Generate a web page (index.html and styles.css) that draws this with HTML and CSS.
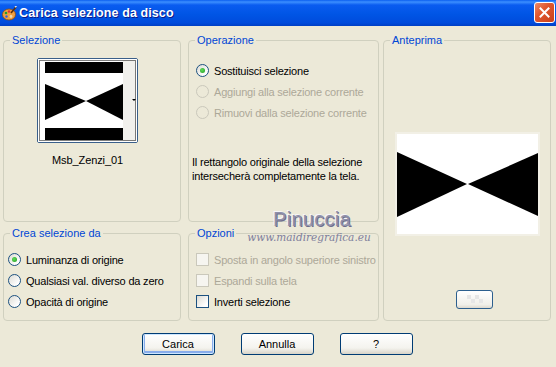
FILE: index.html
```html
<!DOCTYPE html>
<html lang="it">
  <head>
    <meta charset="UTF-8" />
    <meta name="viewport" content="width=device-width, initial-scale=1.0" />
    <title>Carica selezione da disco</title>
    <link rel="stylesheet" href="styles.css">
  </head>
  <body>
    <div class="window">
      <div class="titlebar">
        <svg class="app-icon" width="15" height="15" viewBox="0 0 15 15">
          <ellipse cx="7" cy="8.5" rx="6.5" ry="5.5" fill="#f0a040" stroke="#8a4a10" stroke-width="0.8" />
          <circle cx="4" cy="7" r="1.3" fill="#2a9a2a" />
          <circle cx="7" cy="5.5" r="1.2" fill="#e03030" />
          <circle cx="4.5" cy="10.5" r="1.2" fill="#3060e0" />
          <circle cx="9" cy="10.5" r="1.4" fill="#ecd9b0" />
          <path d="M9 7 L14 1" stroke="#5a3010" stroke-width="1.6" />
          <path d="M13 1 L14.5 0" stroke="#e0e0e0" stroke-width="1.6" />
        </svg>
        <span class="title">Carica selezione da disco</span>
        <button class="close-btn" aria-label="Chiudi">
          <svg width="11" height="11" viewBox="0 0 11 11">
            <path d="M1.5 1.5 L9.5 9.5 M9.5 1.5 L1.5 9.5" stroke="#ffffff" stroke-width="2" stroke-linecap="square" />
          </svg>
        </button>
      </div>

      <div class="dialog">
        <div class="groups">
          <fieldset class="group group-sel">
            <legend>Selezione</legend>
            <div class="thumb-col">
              <div class="thumb">
                <svg width="99" height="83" viewBox="0 0 99 83">
                  <rect width="99" height="83" fill="#ffffff" />
                  <rect x="85" y="1" width="13" height="81" fill="#f1f0ec" />
                  <rect x="7" y="3" width="78" height="11" fill="#000000" />
                  <rect x="7" y="69" width="78" height="12" fill="#000000" />
                  <polygon points="7,25 7,61 48,42" fill="#000000" />
                  <polygon points="85,25 85,61 48,42" fill="#000000" />
                  <polygon points="94,40 98,40 96,42" fill="#000000" />
                  <rect x="1.5" y="1.5" width="96" height="80" fill="none" stroke="#000000" stroke-width="1" stroke-dasharray="1 1" />
                </svg>
              </div>
              <div class="thumb-name">Msb_Zenzi_01</div>
            </div>
          </fieldset>

          <fieldset class="group group-op">
            <legend>Operazione</legend>
            <div class="options options-op">
              <label class="option"><span class="radio checked"></span>Sostituisci selezione</label>
              <label class="option disabled"><span class="radio"></span>Aggiungi alla selezione corrente</label>
              <label class="option disabled"><span class="radio"></span>Rimuovi dalla selezione corrente</label>
            </div>
            <p class="note">Il rettangolo originale della selezione intersecherà completamente la tela.</p>
          </fieldset>

          <fieldset class="group group-preview">
            <legend>Anteprima</legend>
            <div class="preview">
              <svg width="141" height="100" viewBox="0 0 141 100">
                <rect width="141" height="100" fill="#ffffff" />
                <polygon points="0,18 0,83 70,50" fill="#000000" />
                <polygon points="141,19 141,82 71,50" fill="#000000" />
              </svg>
            </div>
            <button class="bg-btn" aria-label="Sfondo">
              <svg width="16" height="10" viewBox="0 0 16 10">
                <rect x="0" y="0" width="4" height="4" fill="#e6e6e6" />
                <rect x="8" y="0" width="4" height="4" fill="#e6e6e6" />
                <rect x="4" y="4" width="4" height="4" fill="#e6e6e6" />
                <rect x="12" y="4" width="4" height="4" fill="#e6e6e6" />
              </svg>
            </button>
          </fieldset>

          <fieldset class="group group-crea">
            <legend>Crea selezione da</legend>
            <div class="options options-crea">
              <label class="option"><span class="radio checked"></span>Luminanza di origine</label>
              <label class="option"><span class="radio"></span>Qualsiasi val. diverso da zero</label>
              <label class="option"><span class="radio"></span>Opacità di origine</label>
            </div>
          </fieldset>

          <fieldset class="group group-opz">
            <legend>Opzioni</legend>
            <div class="options options-opz">
              <label class="option disabled"><span class="check"></span>Sposta in angolo superiore sinistro</label>
              <label class="option disabled"><span class="check"></span>Espandi sulla tela</label>
              <label class="option"><span class="check"></span>Inverti selezione</label>
            </div>
          </fieldset>
        </div>

        <div class="buttons">
          <button class="btn btn-default">Carica</button>
          <button class="btn">Annulla</button>
          <button class="btn">?</button>
        </div>
      </div>

      <div class="watermark">
        <span class="wm-name">Pinuccia</span>
        <span class="wm-site">www.maidiregrafica.eu</span>
      </div>
    </div>
  </body>
</html>
```

FILE: styles.css
```css
body {
  margin: 0;
  padding: 0;
  background-color: #ece9d8;
  font-family: "Liberation Sans", Arial, sans-serif;
  font-size: 11px;
  color: #000000;
}

.window {
  position: relative;
  width: 556px;
  height: 367px;
  background-color: #ece9d8;
  overflow: hidden;
}

/* title bar */
.titlebar {
  height: 26px;
  display: flex;
  align-items: center;
  padding: 0 1px 0 2px;
  box-sizing: border-box;
  background: linear-gradient(
    to bottom,
    #0b5ff0 0,
    #3c8fff 2px,
    #0a5cf0 5px,
    #0055e5 55%,
    #004bdc 88%,
    #003fc4 100%
  );
}

.app-icon {
  flex: none;
  margin-top: 1px;
}

.title {
  flex: 1;
  margin-left: 2px;
  color: #ffffff;
  font-weight: bold;
  font-size: 12.5px;
  letter-spacing: 0.1px;
  text-shadow: 1px 1px 0 #0a1a8a;
}

.close-btn {
  width: 21px;
  height: 21px;
  padding: 0;
  display: flex;
  align-items: center;
  justify-content: center;
  border: 1px solid #ffffff;
  border-radius: 3px;
  background: linear-gradient(135deg, #ec8a68 0%, #e0582f 40%, #c8401c 100%);
  margin-top: -2px;
}

/* dialog body */
.dialog {
  padding: 8px 5px 0 3px;
}

.groups {
  display: grid;
  grid-template-columns: 178px 198px 172px;
  grid-template-rows: 188px 94px;
  row-gap: 5px;
}

.group {
  margin: 0;
  padding: 0;
  min-width: 0;
  border: 1px solid #d0d0bf;
  border-radius: 4px;
}

.group legend {
  margin-left: 6px;
  padding: 0 2px;
  line-height: 13px;
  color: #0046d5;
}

.group-op,
.group-opz {
  margin-left: 7px;
}

.group-preview {
  grid-column: 3;
  grid-row: 1 / span 2;
  margin-left: 4px;
  display: flex;
  flex-direction: column;
  align-items: center;
}

.group-crea {
  grid-column: 1;
  grid-row: 2;
}

.group-opz {
  grid-column: 2;
  grid-row: 2;
}

/* selezione */
.thumb-col {
  width: 101px;
  margin: 11px 0 0 33px;
  display: flex;
  flex-direction: column;
  align-items: center;
}

.thumb {
  width: 99px;
  height: 83px;
  border: 1px solid #3a5f8a;
  border-radius: 2px;
}

.thumb svg {
  display: block;
}

.thumb-name {
  margin-top: 11px;
  line-height: 13px;
  letter-spacing: -0.1px;
}

/* radios and checkboxes */
.options {
  display: flex;
  flex-direction: column;
}

.options-op {
  padding: 13px 0 0 7px;
}

.options-crea {
  padding: 9px 0 0 4px;
}

.options-opz {
  padding: 9px 0 0 7px;
}

.option {
  height: 21px;
  display: flex;
  align-items: center;
  white-space: nowrap;
  letter-spacing: -0.2px;
}

.option.disabled {
  color: #aca899;
}

.radio {
  position: relative;
  flex: none;
  width: 11px;
  height: 11px;
  margin-right: 5px;
  border: 1px solid #1c5180;
  border-radius: 50%;
  background: linear-gradient(135deg, #dcdbd4 0%, #ffffff 80%);
}

.radio.checked::after {
  content: "";
  position: absolute;
  left: 3px;
  top: 3px;
  width: 5px;
  height: 5px;
  border-radius: 50%;
  background: radial-gradient(circle at 40% 40%, #60dc5a, #1f9b1f);
}

.option.disabled .radio {
  border-color: #cac8bb;
  background: #ece9d8;
}

.check {
  flex: none;
  width: 11px;
  height: 11px;
  margin-right: 5px;
  border: 1px solid #1c5180;
  background: linear-gradient(135deg, #dcdbd4 0%, #ffffff 80%);
}

.option.disabled .check {
  border-color: #cac8bb;
  background: #f6f5f0;
}

.note {
  margin: 32px 0 0 3px;
  line-height: 14px;
  letter-spacing: -0.2px;
}

/* anteprima */
.preview {
  margin-top: 87px;
  width: 141px;
  height: 100px;
  box-shadow: 0 0 0 2px #f2f0e6;
}

.preview svg {
  display: block;
}

.bg-btn {
  margin: 56px 0 0 15px;
  width: 37px;
  height: 19px;
  padding: 0;
  display: flex;
  align-items: center;
  justify-content: center;
  border: 1px solid #2c5f8e;
  border-radius: 3px;
  background: linear-gradient(to bottom, #ffffff, #f0efe9 80%, #dcd8ce);
}

/* bottom buttons */
.buttons {
  display: flex;
  justify-content: center;
  gap: 26px;
  margin-top: 12px;
}

.btn {
  width: 73px;
  height: 22px;
  padding: 0;
  font-family: "Liberation Sans", Arial, sans-serif;
  font-size: 11px;
  color: #000000;
  border: 1px solid #003c74;
  border-radius: 3px;
  background: linear-gradient(to bottom, #ffffff 0%, #f4f3ee 70%, #d8d4c8 100%);
}

.btn-default {
  box-shadow: inset 0 0 0 1px #cee7ff, inset 0 -1px 0 2px #89adeb;
}

/* watermark over the dialog */
.watermark {
  position: absolute;
  left: 246px;
  top: 208px;
  width: 126px;
  display: flex;
  flex-direction: column;
  align-items: center;
  pointer-events: none;
}

.wm-name {
  margin-left: 6px;
  font-family: "Liberation Sans", Arial, sans-serif;
  font-size: 20px;
  line-height: 23px;
  color: #9090aa;
  letter-spacing: 0.3px;
  text-shadow: 1px 1px 0 #6e6e8c, -1px -1px 0 #f6f6fa;
}

.wm-site {
  font-family: "DejaVu Serif", serif;
  font-style: italic;
  font-size: 10.5px;
  line-height: 13px;
  color: #7e7e9c;
}
```
